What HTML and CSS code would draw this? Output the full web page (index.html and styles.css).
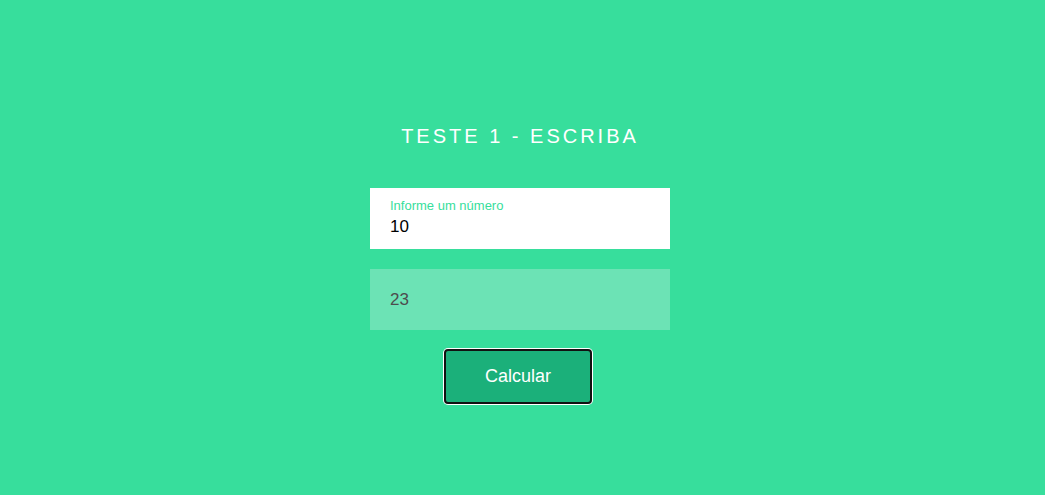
FILE: index.html
```html
<!DOCTYPE html>
<html lang="pt">
<head>
<meta charset="utf-8">
<title>Teste 1 - Escriba</title>
<link rel="stylesheet" href="styles.css">
</head>
<body>
<main class="page">
  <h1 class="title">TESTE 1 - ESCRIBA</h1>
  <form class="form">
    <label class="field">
      <span class="field-label">Informe um número</span>
      <input class="field-input" type="text" value="10">
    </label>
    <div class="result">23</div>
    <button class="btn" type="button">Calcular</button>
  </form>
</main>
</body>
</html>
```

FILE: styles.css
```css
* { box-sizing: border-box; }
html, body { margin: 0; padding: 0; }
body {
  background: #37de9c;
  font-family: "Liberation Sans", Arial, sans-serif;
  width: 1045px;
  height: 495px;
  overflow: hidden;
}
.page {
  display: flex;
  flex-direction: column;
  align-items: center;
  padding-top: 122px;
  padding-right: 5px;
}
.title {
  margin: 0;
  font-weight: normal;
  font-size: 20px;
  line-height: 28px;
  letter-spacing: 3px;
  color: #ffffff;
}
.form {
  margin-top: 38px;
  width: 300px;
  display: flex;
  flex-direction: column;
  align-items: center;
}
.field {
  width: 300px;
  height: 61px;
  background: #ffffff;
  padding: 10px 20px 0;
  display: flex;
  flex-direction: column;
}
.field-label {
  font-size: 13px;
  line-height: 15px;
  color: #37de9c;
}
.field-input {
  border: none;
  outline: none;
  padding: 0;
  margin: 3px 0 0;
  font-family: inherit;
  font-size: 17px;
  line-height: 22px;
  height: 22px;
  color: #000;
  background: transparent;
  width: 100%;
}
.result {
  margin-top: 20px;
  width: 300px;
  height: 61px;
  background: #6ce3b5;
  padding: 0 20px;
  display: flex;
  align-items: center;
  font-size: 17px;
  color: #4d4d4d;
}
.btn {
  margin-top: 19px;
  margin-right: 4px;
  width: 148px;
  height: 55px;
  background: #1bb07a;
  color: #ffffff;
  border: 2px solid #111;
  border-radius: 4px;
  box-shadow: 0 0 0 1px #ffffff;
  font-family: inherit;
  font-size: 18px;
}
```
